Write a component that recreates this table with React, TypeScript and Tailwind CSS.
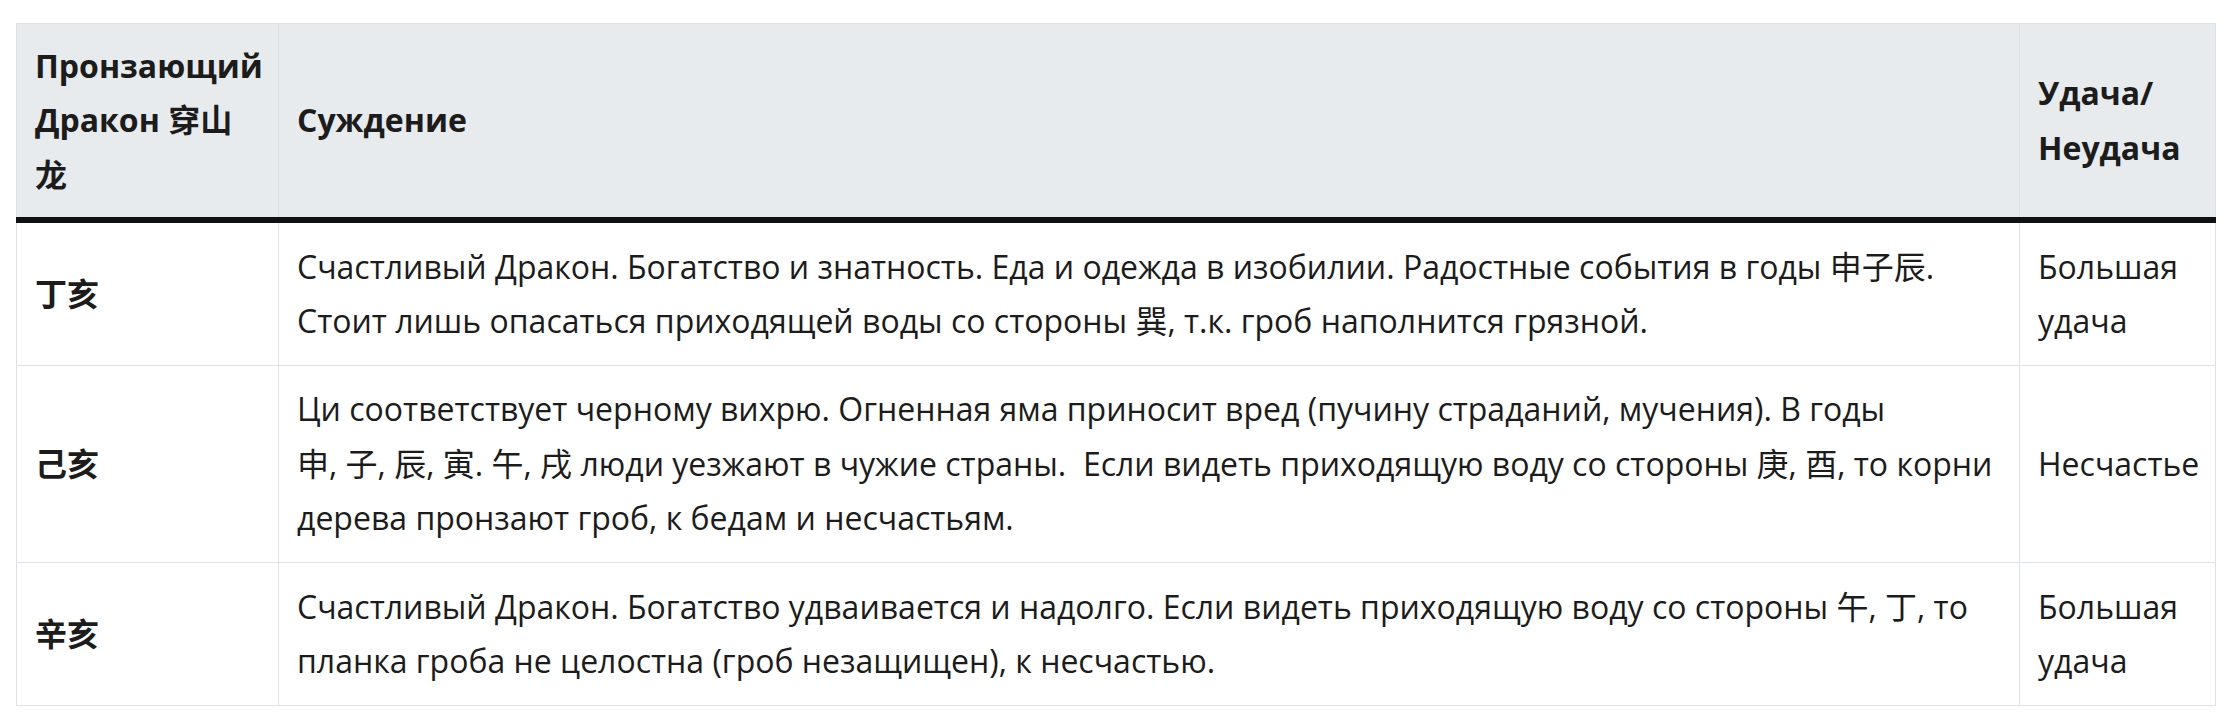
import type { FC, ReactNode } from 'react'

type Row = {
  pillar: string
  text: ReactNode
  verdict: string
}

const rows: Row[] = [
  {
    pillar: '丁亥',
    text: 'Счастливый Дракон. Богатство и знатность. Еда и одежда в изобилии. Радостные события в годы 申子辰. Стоит лишь опасаться приходящей воды со стороны 巽, т.к. гроб наполнится грязной.',
    verdict: 'Большая удача',
  },
  {
    pillar: '己亥',
    text: (
      <>
        Ци соответствует черному вихрю. Огненная яма приносит вред (пучину страданий, мучения). В годы
        <br />
        申, 子, 辰, 寅. 午, 戌 люди уезжают в чужие страны.{'\u00a0'} Если видеть приходящую воду со стороны 庚, 酉, то корни дерева пронзают гроб, к бедам и несчастьям.
      </>
    ),
    verdict: 'Несчастье',
  },
  {
    pillar: '辛亥',
    text: 'Счастливый Дракон. Богатство удваивается и надолго. Если видеть приходящую воду со стороны 午, 丁, то планка гроба не целостна (гроб незащищен), к несчастью.',
    verdict: 'Большая удача',
  },
]

const cell = 'border border-[#dee2e6] px-[18px] align-middle'
const head = `${cell} py-[15px] border-b-[6px] border-b-[#111] font-bold`
const body = `${cell} py-[16.5px]`

const App: FC = () => {
  return (
    <div className="min-h-[727px] bg-white pl-[16px] pt-[23px] font-['Open_Sans','Noto_Sans_CJK_SC',sans-serif] text-[#1c1c1c]">
      <table className="w-[2199px] table-fixed border-collapse text-left text-[32px] leading-[1.7]">
        <colgroup>
          <col className="w-[262px]" />
          <col className="w-[1741px]" />
          <col className="w-[196px]" />
        </colgroup>
        <thead>
          <tr className="bg-[#e8ebee]">
            <th className={head}>Пронзающий Дракон 穿山 龙</th>
            <th className={head}>Суждение</th>
            <th className={head}>Удача/ Неудача</th>
          </tr>
        </thead>
        <tbody>
          {rows.map((r) => (
            <tr key={r.pillar}>
              <td className={`${body} font-bold`}>{r.pillar}</td>
              <td className={body}>{r.text}</td>
              <td className={body}>{r.verdict}</td>
            </tr>
          ))}
        </tbody>
      </table>
    </div>
  )
}

export default App
